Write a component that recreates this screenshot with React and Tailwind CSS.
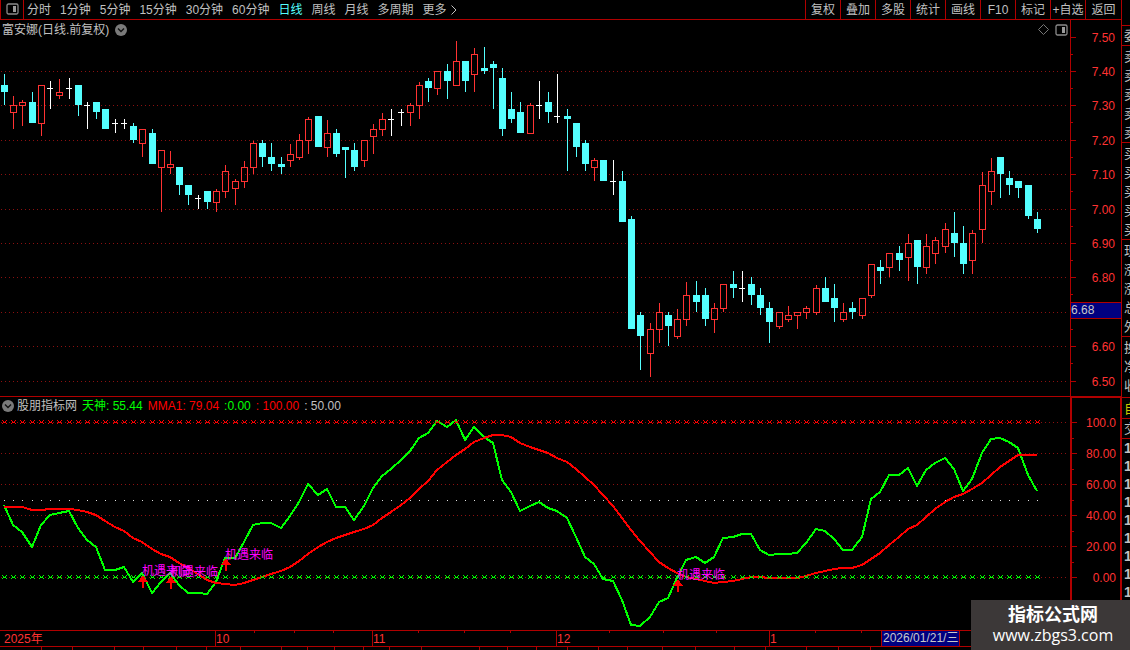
import React, { useState } from 'react';
import clsx from 'clsx';

const UP = '#ff3232';
const DOWN = '#54ffff';
const FLAT = '#ffffff';
const FRAME = '#b00000';
const GRID = '#8c1010';

const PERIODS = ['分时', '1分钟', '5分钟', '15分钟', '30分钟', '60分钟', '日线', '周线', '月线', '多周期'];
const TOOLS = ['复权', '叠加', '多股', '统计', '画线', 'F10', '标记', '+自选', '返回'];

// [kind, high, body top, body bottom, low], one entry per trading day
const CANDLES = [
    ['d', 74, 85, 92, 105], ['u', 96, 105, 113, 129], ['u', 100, 102, 106, 126], ['d', 92, 102, 123, 123],
    ['u', 85, 85, 124, 136], ['f', 81, 88, 89, 109], ['u', 79, 92, 96, 99], ['f', 78, 88, 89, 99],
    ['d', 85, 85, 105, 116], ['f', 102, 105, 106, 129], ['d', 102, 102, 112, 119], ['d', 109, 109, 129, 129],
    ['f', 119, 123, 124, 133], ['f', 119, 123, 124, 129], ['d', 123, 126, 140, 143], ['u', 129, 129, 144, 157],
    ['d', 129, 133, 164, 164], ['u', 150, 150, 168, 212], ['u', 151, 164, 168, 174], ['d', 167, 167, 185, 195],
    ['d', 185, 185, 195, 205], ['f', 195, 198, 199, 209], ['d', 191, 191, 202, 209], ['u', 189, 191, 203, 212],
    ['u', 165, 171, 192, 198], ['u', 179, 181, 189, 205], ['u', 161, 167, 182, 188], ['u', 141, 143, 168, 174],
    ['d', 140, 143, 157, 167], ['d', 143, 157, 164, 171], ['d', 157, 164, 167, 174], ['u', 144, 154, 161, 167],
    ['u', 134, 140, 158, 160], ['u', 117, 119, 141, 154], ['d', 116, 116, 147, 147], ['u', 120, 133, 148, 157],
    ['d', 129, 133, 154, 157], ['d', 147, 147, 150, 178], ['d', 143, 150, 167, 171], ['u', 140, 140, 161, 167],
    ['u', 124, 129, 137, 154], ['u', 113, 119, 130, 136], ['f', 109, 119, 120, 136], ['f', 109, 112, 113, 126],
    ['u', 103, 105, 113, 126], ['u', 82, 85, 106, 119], ['d', 78, 81, 88, 102], ['u', 71, 71, 89, 95],
    ['d', 64, 71, 81, 99], ['u', 41, 61, 86, 86], ['d', 61, 61, 81, 92], ['u', 48, 54, 75, 92],
    ['d', 47, 68, 71, 74], ['d', 61, 64, 68, 109], ['d', 68, 78, 129, 136], ['d', 92, 109, 119, 123],
    ['d', 102, 112, 133, 133], ['u', 103, 105, 134, 134], ['f', 81, 105, 106, 119], ['d', 92, 102, 112, 123],
    ['f', 74, 116, 117, 123], ['d', 109, 116, 119, 171], ['d', 123, 123, 147, 157], ['d', 140, 143, 164, 171],
    ['u', 158, 160, 168, 181], ['d', 160, 160, 181, 181], ['f', 160, 181, 182, 195], ['d', 171, 181, 222, 222],
    ['d', 216, 219, 329, 329], ['d', 312, 315, 336, 370], ['u', 323, 329, 354, 377], ['u', 303, 312, 330, 343],
    ['d', 312, 315, 326, 346], ['u', 309, 319, 337, 339], ['u', 282, 295, 320, 326], ['d', 281, 295, 302, 312],
    ['d', 288, 295, 319, 326], ['u', 303, 308, 320, 333], ['u', 284, 284, 309, 312], ['d', 271, 284, 288, 298],
    ['f', 271, 288, 289, 302], ['d', 277, 284, 295, 305], ['d', 288, 295, 308, 315], ['d', 302, 308, 322, 343],
    ['u', 312, 312, 327, 329], ['u', 306, 315, 320, 322], ['u', 312, 312, 316, 329], ['u', 306, 308, 313, 319],
    ['u', 285, 288, 313, 315], ['d', 277, 288, 302, 302], ['d', 284, 298, 308, 322], ['u', 303, 312, 320, 322],
    ['d', 302, 308, 312, 319], ['u', 298, 298, 316, 319], ['u', 264, 264, 296, 298], ['d', 260, 267, 271, 284],
    ['u', 253, 253, 268, 277], ['d', 246, 253, 260, 271], ['u', 234, 243, 258, 281], ['d', 240, 240, 267, 284],
    ['u', 234, 246, 268, 274], ['u', 237, 240, 254, 264], ['u', 223, 229, 247, 253], ['d', 212, 233, 243, 257],
    ['d', 226, 243, 264, 274], ['u', 230, 233, 261, 274], ['u', 172, 185, 230, 243], ['u', 158, 171, 192, 205],
    ['d', 157, 157, 174, 198], ['d', 171, 178, 185, 195], ['d', 181, 181, 188, 198], ['d', 185, 185, 216, 219],
    ['d', 212, 219, 229, 233],
];

const FAST = [
    505, 525, 532, 547, 525, 515, 513, 511, 528, 540, 547, 570, 570, 567, 582, 573, 593, 582, 573, 585, 593, 593,
    594, 582, 558, 558, 542, 525, 523, 523, 528, 516, 502, 484, 495, 489, 507, 507, 520, 506, 488, 476, 469, 460,
    451, 438, 433, 421, 427, 420, 440, 427, 437, 443, 480, 492, 511, 506, 502, 508, 511, 518, 537, 557, 564, 579,
    581, 600, 625, 626, 617, 602, 598, 578, 560, 557, 563, 557, 538, 537, 534, 534, 550, 555, 554, 554, 553, 543,
    529, 531, 539, 550, 550, 537, 499, 492, 475, 475, 468, 486, 470, 463, 458, 469, 491, 479, 453, 439, 438, 442,
    448, 475, 491,
];

const SLOW = [
    507, 507, 507, 510, 510, 509, 509, 509, 510, 512, 515, 521, 527, 531, 538, 542, 549, 554, 557, 563, 568, 574,
    580, 583, 584, 585, 583, 580, 577, 574, 571, 567, 561, 554, 547, 542, 538, 535, 532, 529, 525, 518, 512, 505,
    498, 489, 481, 470, 462, 455, 449, 442, 438, 435, 435, 437, 443, 447, 450, 453, 458, 462, 469, 477, 485, 495,
    506, 518, 530, 541, 552, 562, 568, 573, 577, 579, 581, 583, 582, 581, 579, 577, 577, 578, 578, 578, 578, 576,
    573, 571, 569, 568, 568, 565, 559, 553, 545, 537, 529, 525, 517, 509, 502, 497, 494, 489, 483, 475, 467, 461,
    455, 455, 455,
];

const PRICE_ROWS = [
    ['7.50', 37], ['7.40', 71], ['7.30', 105], ['7.20', 140], ['7.10', 174], ['7.00', 209],
    ['6.90', 243], ['6.80', 277], ['', 312], ['6.60', 346], ['6.50', 381],
];
const LEVEL_ROWS = [['100.0', 422], ['80.00', 453], ['60.00', 484], ['40.00', 515], ['20.00', 546], ['0.00', 577]];

// text x, text baseline, arrow x, arrow tip
const SIGNALS = [
    [142, 575, 143, 575],
    [170, 576, 171, 576],
    [225, 559, 226, 558],
    [677, 579, 678, 579],
];

const MONTHS = [['10', 215], ['11', 372], ['12', 556], ['1', 769]];
const WEEK_TICKS = [254, 294, 333, 418, 464, 510, 609, 663, 716, 815, 861];

const QUOTE_GROUPS = [
    { rows: ['委'], style: 'text-[#c0c0c0]' },
    { rows: ['卖', '卖', '卖', '卖', '卖'], style: 'pt-px text-[#c0c0c0]' },
    { rows: ['买', '买', '买', '买', '买'], style: 'pt-px text-[#c0c0c0]' },
    { rows: ['现', '涨', '涨', '总', '外'], style: 'pt-px text-[#c0c0c0]' },
    { rows: ['换', '净', '收'], style: 'pt-px pb-[2px] text-[#c0c0c0]' },
    { rows: ['自'], style: 'pt-px text-[#c8c800]' },
    { rows: ['交'], style: 'text-[#c0c0c0]' },
];

const FOOTER_TABS = [42, 31, 42, 29, 33, 30, 34, 41, 26, 27, 29, 26, 32, 58, 28, 29, 31, 31, 29, 35, 33, 39, 31, 41, 32, 32];

const dayX = (i) => Math.floor(4.45 + i * 9.223);
const toPoints = (rows) => rows.map((y, i) => `${dayX(i)},${y}`).join(' ');

const PanelIcon = ({ className }) => (
    <svg className={className} width="13" height="12" viewBox="0 0 13 12" aria-hidden="true">
        <rect x="1" y="1" width="11" height="10" rx="1.5" fill="none" stroke="#8a8a8a" strokeWidth="1.3" />
        <rect x="7" y="3" width="3" height="6" fill="#9a9a9a" />
    </svg>
);

const CollapseButton = ({ label }) => (
    <button type="button" aria-label={label} className="shrink-0">
        <svg width="12" height="12" viewBox="0 0 12 12">
            <circle cx="6" cy="6" r="6" fill="#7a7a7a" />
            <path d="M3 4.5 L6 7.5 L9 4.5" fill="none" stroke="#111" strokeWidth="1.4" />
        </svg>
    </button>
);

const GridRow = ({ y }) => (
    <line x1="1" x2="1067" y1={y + 0.5} y2={y + 0.5} stroke={GRID} strokeDasharray="1 3" />
);

const Candle = ({ x, data }) => {
    const [kind, high, top, bottom, low] = data;
    if (kind === 'f') {
        return (
            <g fill={FLAT}>
                <rect x={x} y={high} width="1" height={low - high} />
                <rect x={x - 3} y={top} width="6" height="1" />
            </g>
        );
    }
    if (kind === 'd') {
        return (
            <g fill={DOWN}>
                <rect x={x} y={high} width="1" height={low - high} />
                <rect x={x - 3} y={top} width="7" height={bottom - top} />
            </g>
        );
    }
    return (
        <g fill={UP}>
            <rect x={x} y={high} width="1" height={top - high} />
            <rect x={x} y={bottom} width="1" height={low - bottom} />
            <rect x={x - 2.5} y={top + 0.5} width="6" height={bottom - top - 1} fill="none" stroke={UP} />
        </g>
    );
};

const CrossMark = ({ x, y, color }) => (
    <path
        d={`M${x - 2} ${y - 2}h1v1h-1z M${x + 2} ${y - 2}h1v1h-1z M${x - 1} ${y - 1}h1v1h-1z M${x + 1} ${y - 1}h1v1h-1z M${x} ${y}h1v1h-1z M${x - 1} ${y}h1v1h-1z M${x - 2} ${y + 1}h1v1h-1z M${x + 1} ${y}h1v1h-1z M${x + 2} ${y + 1}h1v1h-1z`}
        fill={color}
    />
);

const PriceChart = () => (
    <svg className="block w-full h-[357px]" shapeRendering="crispEdges">
        <g transform="translate(0 -39)">
            {PRICE_ROWS.slice(1).map(([, y]) => <GridRow key={y} y={y} />)}
            {CANDLES.map((data, i) => <Candle key={i} x={dayX(i)} data={data} />)}
        </g>
    </svg>
);

const IndicatorChart = () => (
    <svg className="block w-full h-[216px]" shapeRendering="crispEdges">
        <g transform="translate(0 -414)">
            {LEVEL_ROWS.map(([, y]) => <GridRow key={y} y={y} />)}
            {CANDLES.map((_, i) => (
                <rect key={i} x={dayX(i)} y="500" width="1" height="1" fill="#e0e0e0" />
            ))}
            <polyline points={toPoints(FAST)} fill="none" stroke="#00ff00" strokeWidth="2" />
            <polyline points={toPoints(SLOW)} fill="none" stroke="#ff0000" strokeWidth="2" />
            {CANDLES.map((_, i) => (
                <g key={i}>
                    <CrossMark x={dayX(i)} y={422} color="#ff0000" />
                    <CrossMark x={dayX(i)} y={577} color="#00ff00" />
                </g>
            ))}
            {SIGNALS.map(([tx, ty, ax, ay]) => (
                <g key={tx}>
                    <path d={`M${ax} ${ay}l5 7h-4v6h-2v-6h-4z`} fill="#ff0000" />
                    <text x={tx} y={ty} fill="#ff00ff" fontSize="12">机遇来临</text>
                </g>
            ))}
        </g>
    </svg>
);

const AxisRows = ({ rows, half }) => (
    <>
        {rows.map(([label, y], i) => (
            <g key={y}>
                <rect x="0" y={y} width="5" height="1" fill={FRAME} />
                {i < rows.length - 1 && <rect x="0" y={y + half} width="2" height="1" fill={FRAME} />}
                <text x="44" y={y + 5} textAnchor="end" fontSize="12" fill={UP}>{label}</text>
            </g>
        ))}
    </>
);

const PriceAxis = () => (
    <svg className="block w-full h-[376px]">
        <g transform="translate(0 -20)">
            <AxisRows rows={PRICE_ROWS} half={17} />
            <rect x="0" y="302" width="100%" height="17" fill={FRAME} />
            <rect x="0" y="303" width="100%" height="15" fill="#000080" />
            <text x="0" y="314" fontSize="12" fill="#c8c8c8">6.68</text>
        </g>
    </svg>
);

const LevelAxis = () => (
    <svg className="block w-full h-[232px]">
        <g transform="translate(0 -398)">
            <AxisRows rows={LEVEL_ROWS} half={16} />
        </g>
    </svg>
);

const TimeAxis = () => (
    <svg className="block w-full h-[15px]">
        <g fontSize="12" fill={UP}>
            <text x="4" y="12">2025年</text>
            {MONTHS.map(([label, x]) => (
                <g key={label}>
                    <rect x={x} y="0" width="1" height="15" fill={FRAME} />
                    <text x={x + 1} y="12">{label}</text>
                </g>
            ))}
            {WEEK_TICKS.map((x) => <rect key={x} x={x} y="0" width="1" height="2" fill={FRAME} />)}
            <rect x="881" y="0" width="79" height="15" fill={FRAME} />
            <rect x="882" y="0" width="77" height="15" fill="#000080" />
            <text x="883" y="11" fill="#c8c8c8">2026/01/21/三</text>
        </g>
    </svg>
);

const Toolbar = ({ period, onPeriod }) => (
    <header className="flex h-5 items-stretch border-b border-[#b00000]">
        <button type="button" aria-label="侧栏" className="flex w-6 shrink-0 items-center justify-center border-x border-[#b00000] pb-[2px]">
            <PanelIcon />
        </button>
        <nav className="flex flex-1 items-center gap-[9px] pl-[3px] whitespace-nowrap">
            {PERIODS.map((name) => (
                <button
                    key={name}
                    type="button"
                    onClick={() => onPeriod(name)}
                    className={clsx('leading-[18px]', name === period ? 'text-[#54ffff]' : 'text-[#c0c0c0]')}
                >
                    {name}
                </button>
            ))}
            <button type="button" className="flex items-center gap-1 leading-[18px]">
                更多
                <svg width="6" height="10" viewBox="0 0 6 10" aria-hidden="true">
                    <path d="M0.5 0.5 L5 5 L0.5 9.5" fill="none" stroke="#c0c0c0" />
                </svg>
            </button>
        </nav>
        <div className="flex shrink-0">
            {TOOLS.map((name) => (
                <button key={name} type="button" className="w-[35px] border-l border-[#b00000] leading-[18px] whitespace-nowrap last:w-9">
                    {name}
                </button>
            ))}
        </div>
    </header>
);

const QuotePanel = () => (
    <aside className="w-[9px] shrink-0 overflow-hidden border-l border-[#b00000] pt-[25px]">
        {QUOTE_GROUPS.map(({ rows, style }, g) => (
            <div key={g} className={clsx('border-t border-[#b00000] pl-[2px]', style)}>
                {rows.map((name, i) => <div key={i} className="w-4 text-[13px] leading-[19px]">{name}</div>)}
            </div>
        ))}
        <div className="border-t border-[#b00000] pl-[2px]">
            {Array.from({ length: 9 }, (_, i) => (
                <div key={i} className="text-sm leading-[18px] font-bold text-[#c0c0c0]">1</div>
            ))}
        </div>
    </aside>
);

const App = () => {
    const [period, setPeriod] = useState('日线');

    return (
        <div className="relative flex min-h-screen overflow-hidden bg-black text-xs text-[#c0c0c0] font-['Liberation_Sans','Noto_Sans_CJK_SC',sans-serif]">
            <main className="flex min-w-0 flex-1 flex-col">
                <Toolbar period={period} onPeriod={setPeriod} />

                {/* Candles */}
                <section className="flex">
                    <div className="min-w-0 flex-1">
                        <div className="flex h-[19px] items-center gap-[6px] px-[2px]">
                            <h1>富安娜(日线.前复权)</h1>
                            <CollapseButton label="主图" />
                            <svg className="ml-auto" width="11" height="11" viewBox="0 0 11 11" aria-hidden="true">
                                <path d="M5.5 0.5 L10.5 5.5 L5.5 10.5 L0.5 5.5 Z" fill="none" stroke="#777" />
                            </svg>
                            <PanelIcon />
                        </div>
                        <PriceChart />
                    </div>
                    <div className="w-[51px] shrink-0 border-l border-[#b00000]">
                        <PriceAxis />
                    </div>
                </section>

                {/* Indicator */}
                <section className="flex">
                    <div className="min-w-0 flex-1 border-t border-[#b00000]">
                        <div className="flex h-[17px] items-center gap-[5px] pl-[2px] whitespace-nowrap">
                            <div className="flex items-center gap-[3px]">
                                <CollapseButton label="副图" />
                                <span>股朋指标网</span>
                            </div>
                            <span className="text-[#00ff00]">天神: 55.44</span>
                            <span className="text-[#ff0000]">MMA1: 79.04</span>
                            <span className="text-[#00ff00]">:0.00</span>
                            <span className="text-[#ff0000]">: 100.00</span>
                            <span>: 50.00</span>
                        </div>
                        <IndicatorChart />
                    </div>
                    <div className="w-[51px] shrink-0 border-t-2 border-r border-l-2 border-[#b00000]">
                        <LevelAxis />
                    </div>
                </section>

                <div className="border-t border-[#b00000]">
                    <TimeAxis />
                </div>
                <footer className="flex min-h-1 flex-1 border-t border-[#b00000]">
                    {FOOTER_TABS.map((width, i) => (
                        <span key={i} className="shrink-0 border-r border-[#b00000]" style={{ width }} />
                    ))}
                </footer>
            </main>

            <QuotePanel />

            <div className="absolute right-0 bottom-0 flex h-[50px] w-[159px] flex-col items-center justify-center bg-[#3c3838] pl-[5px] text-white">
                <strong className="text-lg leading-5 font-bold">指标公式网</strong>
                <span className="font-['Open_Sans',sans-serif] text-base leading-5">www.zbgs3.com</span>
            </div>
        </div>
    );
};

export default App;
